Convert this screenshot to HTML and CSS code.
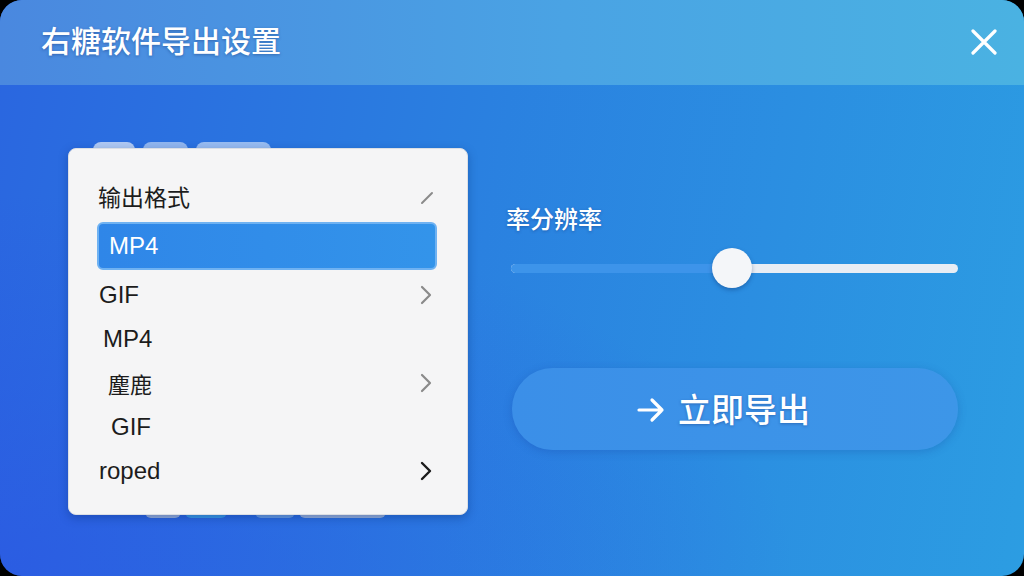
FILE: index.html
```html
<!DOCTYPE html>
<html lang="zh-CN">
<head>
    <meta charset="UTF-8">
    <title>右糖软件导出设置</title>
    <link rel="stylesheet" href="styles.css">
</head>
<body>
<div class="window">
    <div class="header">
        <h1 class="title">右糖软件导出设置</h1>
        <span class="close">
            <svg width="26" height="26" viewBox="0 0 26 26"><path d="M2 2L24 24M24 2L2 24" stroke="#fff" stroke-width="3.2" stroke-linecap="round"/></svg>
        </span>
    </div>
    <div class="main">
        <div class="left">
            <!-- 下拉框后面的标签条 -->
            <div class="tabs">
                <span class="tab t1"></span><span class="tab t2"></span><span class="tab t3"></span>
            </div>
            <div class="tabs tabs-bottom">
                <span class="tab b1"></span><span class="tab b2"></span><span class="tab b3"></span><span class="tab b4"></span>
            </div>
            <div class="dropdown">
                <div class="row head">
                    <span class="label">输出格式</span>
                    <svg class="icon" width="14" height="14" viewBox="0 0 14 14"><path d="M2 12L12 2" stroke="#8a8a8a" stroke-width="2" stroke-linecap="round"/></svg>
                </div>
                <div class="row selected"><span class="label">MP4</span></div>
                <div class="row i1">
                    <span class="label">GIF</span>
                    <svg class="icon" width="12" height="20" viewBox="0 0 12 20"><path d="M2 2L10 10L2 18" fill="none" stroke="#8a8a8a" stroke-width="2.2" stroke-linecap="round" stroke-linejoin="round"/></svg>
                </div>
                <div class="row i2"><span class="label">MP4</span></div>
                <div class="row i3">
                    <span class="label cjk">麈鹿</span>
                    <svg class="icon" width="12" height="20" viewBox="0 0 12 20"><path d="M2 2L10 10L2 18" fill="none" stroke="#8a8a8a" stroke-width="2.2" stroke-linecap="round" stroke-linejoin="round"/></svg>
                </div>
                <div class="row i4"><span class="label">GIF</span></div>
                <div class="row i5">
                    <span class="label">roped</span>
                    <svg class="icon" width="12" height="20" viewBox="0 0 12 20"><path d="M2 2L10 10L2 18" fill="none" stroke="#1a1a1a" stroke-width="2.4" stroke-linecap="round" stroke-linejoin="round"/></svg>
                </div>
            </div>
        </div>
        <div class="right">
            <div class="res-label">率分辨率</div>
            <div class="slider">
                <div class="track">
                    <div class="fill" style="width: 49.5%"></div>
                    <div class="thumb" style="left: 49.5%"></div>
                </div>
            </div>
            <div class="export">
                <svg width="30" height="26" viewBox="0 0 30 26"><path d="M3 13H26M16 3L26 13L16 23" fill="none" stroke="#fff" stroke-width="3.2" stroke-linecap="round" stroke-linejoin="round"/></svg>
                <span>立即导出</span>
            </div>
        </div>
    </div>
</div>
</body>
</html>
```

FILE: styles.css
```css
* {
    padding: 0;
    margin: 0;
    box-sizing: border-box;
}

body {
    background: #000;
    width: 1024px;
    height: 576px;
    overflow: hidden;
    font-family: "Liberation Sans", "Noto Sans CJK SC", sans-serif;
}

.window {
    width: 1024px;
    height: 576px;
    border-radius: 22px;
    overflow: hidden;
    background: linear-gradient(100deg, #2a66e0 0%, #2a80e0 45%, #2c9de2 100%);
    display: flex;
    flex-direction: column;
}

.header {
    height: 85px;
    flex-shrink: 0;
    display: flex;
    align-items: center;
    justify-content: space-between;
    padding: 0 27px 0 41px;
    background: linear-gradient(90deg, #4a88df 0%, #4aa3e4 55%, #4ab2e2 100%);
}

.title {
    font-family: "Noto Sans CJK SC", sans-serif;
    font-size: 30px;
    font-weight: 500;
    color: #fff;
    text-shadow: 0 1px 3px rgba(20, 50, 120, 0.45);
    margin-top: -8px;
}

.close {
    display: flex;
    margin-top: -1px;
}

.main {
    flex: 1;
    display: flex;
    gap: 40px;
    padding: 0 66px 0 68px;
    background: radial-gradient(ellipse at 0% 100%, rgba(44, 80, 228, 0.55) 0%, rgba(44, 80, 228, 0) 55%);
}

.left {
    width: 400px;
    margin-top: 63px;
    position: relative;
}

.tabs {
    position: absolute;
    top: -6px;
    left: 25px;
    display: flex;
    gap: 8px;
}

.tab {
    display: block;
    height: 12px;
    border-radius: 8px 8px 0 0;
    background: rgba(220, 232, 250, 0.75);
}

.t1 { width: 42px; }
.t2 { width: 45px; background: rgba(190, 212, 245, 0.7); }
.t3 { width: 75px; background: rgba(200, 220, 248, 0.7); }

.tabs-bottom {
    top: 360px;
    left: 77px;
    gap: 4px;
}

.tabs-bottom .tab {
    border-radius: 0 0 6px 6px;
    height: 10px;
    background: rgba(180, 195, 220, 0.8);
}

.b1 { width: 36px; }
.b2 { width: 42px; background: #3a9ae8 !important; }
.b3 { width: 40px; margin-left: 24px; background: rgba(120, 170, 230, 0.8) !important; }
.b4 { width: 87px; }

.dropdown {
    position: relative;
    height: 367px;
    background: #f5f5f6;
    border: 1px solid #dcdfe4;
    border-radius: 8px;
    box-shadow: 0 3px 10px rgba(10, 40, 110, 0.35);
    padding: 23px 30px 0 28px;
}

.row {
    height: 44px;
    display: flex;
    align-items: center;
    justify-content: space-between;
    font-size: 24px;
    color: #1c1c1c;
    padding-right: 5px;
}

.row .label {
    font-family: "Liberation Sans", "Noto Sans CJK SC", sans-serif;
}

.head {
    height: 47px;
    padding-left: 1px;
    padding-right: 3px;
}

.head .label {
    font-family: "Noto Sans CJK SC", sans-serif;
    font-size: 23px;
    font-weight: 400;
}

.head .icon {
    margin-top: 4px;
}

.selected {
    height: 48px;
    margin: 3px 0 3px;
    padding-left: 10px;
    background: linear-gradient(90deg, #2f86e8, #3394ea);
    border: 2px solid #6fb2f2;
    border-radius: 6px;
    color: #fff;
}

.i1 { padding-left: 2px; }
.i2 { padding-left: 6px; }
.i3 { padding-left: 11px; }
.i4 { padding-left: 14px; }
.i5 { padding-left: 2px; }

.cjk {
    font-family: "Noto Sans CJK SC", sans-serif !important;
    font-size: 22px;
}

.right {
    flex: 1;
    padding-top: 117px;
}

.res-label {
    font-family: "Noto Sans CJK SC", sans-serif;
    font-size: 24px;
    font-weight: 500;
    line-height: 32px;
    color: #fff;
    margin-left: -2px;
    text-shadow: 0 1px 3px rgba(20, 50, 120, 0.45);
}

.slider {
    height: 40px;
    margin-top: 14px;
    padding-left: 3px;
    display: flex;
    align-items: center;
}

.track {
    position: relative;
    width: 100%;
    height: 9px;
    border-radius: 5px;
    background: #e8edf4;
}

.fill {
    height: 100%;
    border-radius: 5px 0 0 5px;
    background: #3d94ea;
}

.thumb {
    position: absolute;
    top: 50%;
    width: 40px;
    height: 40px;
    margin: -20px 0 0 -20px;
    border-radius: 50%;
    background: #f4f6f9;
    box-shadow: 0 2px 4px rgba(10, 40, 100, 0.35);
}

.export {
    height: 82px;
    margin: 80px 0 0 4px;
    padding-right: 24px;
    border-radius: 41px;
    background: linear-gradient(90deg, #3b8fe8, #3d96e8);
    box-shadow: 0 2px 8px rgba(20, 60, 150, 0.25);
    display: flex;
    align-items: center;
    justify-content: center;
    gap: 12px;
    color: #fff;
    font-family: "Noto Sans CJK SC", sans-serif;
    font-size: 33px;
    font-weight: 500;
    text-shadow: 0 1px 3px rgba(20, 50, 120, 0.4);
}

.export svg {
    margin-top: 1px;
}

.export span {
    margin-top: -3px;
}
```
